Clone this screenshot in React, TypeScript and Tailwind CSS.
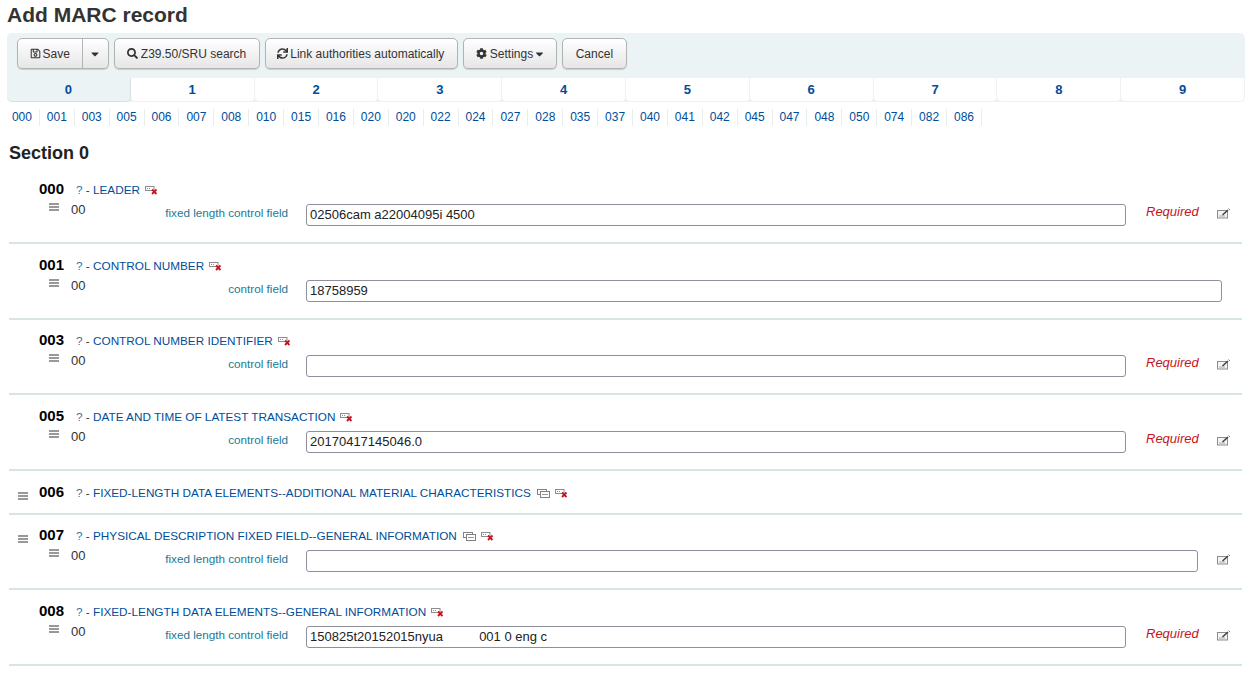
import React from 'react'
import { FaRegSave, FaSearch, FaSync, FaCog, FaCaretDown } from 'react-icons/fa'

const tabs = ['0', '1', '2', '3', '4', '5', '6', '7', '8', '9']
const tagLinks = ['000', '001', '003', '005', '006', '007', '008', '010', '015', '016', '020', '020', '022', '024', '027', '028', '035', '037', '040', '041', '042', '045', '047', '048', '050', '074', '082', '086']

const btn = 'flex h-[31px] items-center rounded-[5px] border border-[#b3b3b3] bg-gradient-to-b from-white to-[#e6e6e6] text-[12px] text-[#333] shadow-[0_1px_1px_rgba(0,0,0,0.15)]'

const DeleteIcon = () => (
  <svg width="13" height="10" viewBox="0 0 13 10" className="shrink-0">
    <rect x="0.5" y="1.5" width="8.5" height="4" fill="#fff" stroke="#8c8c8c" />
    <path d="M2 3.5h1M4 3.5h1" stroke="#8c8c8c" />
    <path d="M7 4.5l4.5 4.5M11.5 4.5L7 9" stroke="#c4161c" strokeWidth="1.8" />
  </svg>
)

const CloneIcon = () => (
  <svg width="13" height="9" viewBox="0 0 13 9" className="ml-px shrink-0">
    <rect x="0.5" y="0.5" width="9" height="5" fill="#fff" stroke="#808080" />
    <rect x="3.5" y="2.5" width="9" height="6" fill="#fff" stroke="#808080" />
    <path d="M5 5.5h6" stroke="#999" />
  </svg>
)

const EditIcon = () => (
  <svg width="14" height="11" viewBox="0 0 14 11" className="shrink-0">
    <rect x="0.5" y="2.5" width="10" height="7.5" fill="#f4f4f4" stroke="#8c8c8c" />
    <path d="M2 8h6" stroke="#aaa" />
    <path d="M5.5 7l5.5-5" stroke="#444" strokeWidth="1.6" />
    <path d="M11.5 0.5l1.5 1.5" stroke="#777" />
  </svg>
)

const Handle = () => (
  <span className="flex w-[10px] shrink-0 flex-col gap-px">
    <span className="h-[2px] bg-[#999]" />
    <span className="h-[2px] bg-[#999]" />
    <span className="h-[2px] bg-[#999]" />
  </span>
)

interface Field {
  tag: string
  title: string
  label?: string
  value?: string
  inputWidth?: string
  required?: boolean
  edit?: boolean
  draggable?: boolean
  clone?: boolean
  height: string
  pad: string
}

const fields: Field[] = [
  { tag: '000', title: 'LEADER', label: 'fixed length control field', value: '02506cam a22004095i 4500', inputWidth: 'w-[820px]', required: true, edit: true, height: 'h-[76px]', pad: 'pt-[13px]' },
  { tag: '001', title: 'CONTROL NUMBER', label: 'control field', value: '18758959', inputWidth: 'w-[916px]', height: 'h-[76px]', pad: 'pt-[13px]' },
  { tag: '003', title: 'CONTROL NUMBER IDENTIFIER', label: 'control field', value: '', inputWidth: 'w-[820px]', required: true, edit: true, height: 'h-[75px]', pad: 'pt-[12px]' },
  { tag: '005', title: 'DATE AND TIME OF LATEST TRANSACTION', label: 'control field', value: '20170417145046.0', inputWidth: 'w-[820px]', required: true, edit: true, height: 'h-[76px]', pad: 'pt-[13px]' },
  { tag: '006', title: 'FIXED-LENGTH DATA ELEMENTS--ADDITIONAL MATERIAL CHARACTERISTICS', draggable: true, clone: true, height: 'h-[44px]', pad: 'pt-[13px]' },
  { tag: '007', title: 'PHYSICAL DESCRIPTION FIXED FIELD--GENERAL INFORMATION', label: 'fixed length control field', value: '', inputWidth: 'w-[892px]', edit: true, draggable: true, clone: true, height: 'h-[75px]', pad: 'pt-[12px]' },
  { tag: '008', title: 'FIXED-LENGTH DATA ELEMENTS--GENERAL INFORMATION', label: 'fixed length control field', value: '150825t20152015nyua          001 0 eng c', inputWidth: 'w-[820px]', required: true, edit: true, height: 'h-[76px]', pad: 'pt-[13px]' },
]

const FieldRow = ({ field }: { field: Field }) => (
  <div className={`${field.height} ${field.pad} border-b-2 border-[#d6e6e6]`}>
    <div className="flex h-[16px] items-center">
      <span className="flex w-[30px] justify-start pt-[7px] pl-[9px]">{field.draggable && <Handle />}</span>
      <span className="w-[37px] text-[15px] leading-[16px] font-bold text-black">{field.tag}</span>
      <span className="flex items-center gap-[5px] pt-[2px] text-[11.75px] leading-[16px] text-[#004d99]">
        <span className="whitespace-nowrap"><span className="text-[#3a6ea5]">?</span> <span className="text-[#333]">-</span> {field.title}</span>
        {field.clone && <CloneIcon />}
        <DeleteIcon />
      </span>
    </div>
    {field.label !== undefined && (
      <div className="flex items-start">
        <span className="ml-[40px] mt-[6px]"><Handle /></span>
        <span className="ml-[12px] w-[30px] pt-[4px] text-[13px] leading-[17px] text-[#333]">00</span>
        <span className="w-[187px] pt-[9px] text-right text-[11.7px] leading-[14px] whitespace-nowrap text-[#1a7a96]">{field.label}</span>
        <div className={`ml-[18px] mt-[7px] h-[22px] ${field.inputWidth} rounded-[3px] border border-[#8f8f9d] bg-white pl-[3px] text-[13px] leading-[20px] whitespace-pre text-[#222]`}>
          {field.value}
        </div>
        {field.required && <span className="ml-[20px] mt-[6px] w-[71px] text-[13px] italic leading-[17px] text-[#c4161c]">Required</span>}
        {field.edit && <span className={`mt-[11px] ${field.required ? '' : 'ml-[19px]'}`}><EditIcon /></span>}
      </div>
    )}
  </div>
)

export default function App() {
  return (
    <div className="h-[674px] w-[1250px] overflow-hidden bg-white font-['Liberation_Sans',Arial,sans-serif]">
      <h1 className="px-[7px] pt-[3px] text-[21px] leading-[24px] font-bold text-[#333]">Add MARC record</h1>

      <div className="ml-[7px] mt-[6px] w-[1238px] rounded-[5px] bg-[#ebf3f5] pt-[5px]">
        <div className="flex gap-[5px] px-[10px]">
          <div className={`${btn}`}>
            <span className="flex h-full items-center gap-[2px] border-r border-[#b3b3b3] pr-[12px] pl-[11.5px]"><FaRegSave className="text-[11px]" />Save</span>
            <span className="flex w-[25px] justify-center"><FaCaretDown className="text-[12px]" /></span>
          </div>
          <div className={`${btn} gap-[3px] pr-[12.5px] pl-[12px]`}><FaSearch className="text-[11px]" />Z39.50/SRU search</div>
          <div className={`${btn} gap-[2px] pr-[12.5px] pl-[11.5px]`}><FaSync className="text-[11px]" />Link authorities automatically</div>
          <div className={`${btn} gap-[3px] pr-[12px] pl-[12px]`}><FaCog className="text-[11px]" />Settings<FaCaretDown className="-ml-[1px] w-[9px] text-[12px]" /></div>
          <div className={`${btn} px-[12.5px]`}>Cancel</div>
        </div>
        <div className="mt-[9px] grid grid-cols-10">
          {tabs.map((tab, i) => (
            <div
              key={tab}
              className={`h-[24px] rounded-b-[5px] text-center text-[13px] leading-[24px] font-bold text-[#004d99] ${i === 0 ? 'border-r border-b border-[#d6e0e3] bg-[#ebf3f5]' : 'border-r border-b border-[#edf2f3] bg-white'}`}
            >
              {tab}
            </div>
          ))}
        </div>
      </div>

      <div className="mt-[7px] flex pl-[5px]">
        {tagLinks.map((tag, i) => (
          <span key={i} className="w-[34.9px] border-r border-[#e8eeee] text-center text-[12px] leading-[17px] text-[#004d99]">{tag}</span>
        ))}
      </div>

      <h3 className="mt-[17px] pl-[9px] text-[18px] leading-[20px] font-bold text-[#222]">Section 0</h3>

      <div className="mx-[9px] mt-[5px] w-[1233px]">
        {fields.map((field) => (
          <FieldRow key={field.tag} field={field} />
        ))}
      </div>
    </div>
  )
}
